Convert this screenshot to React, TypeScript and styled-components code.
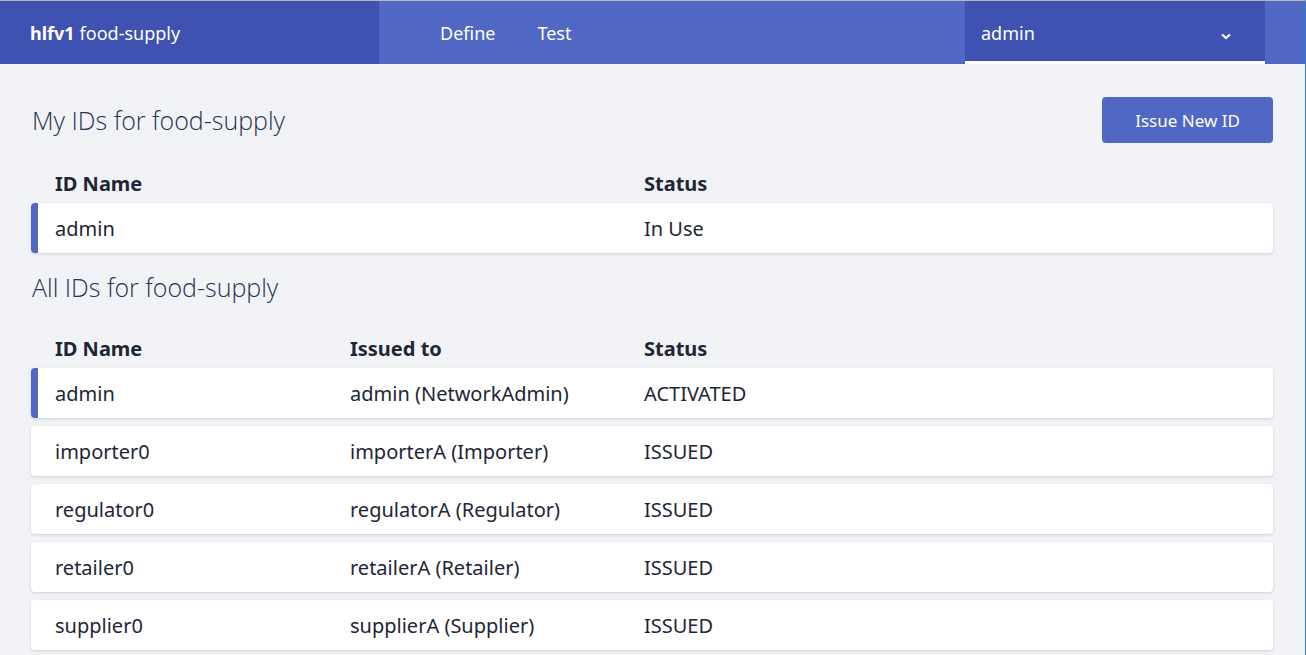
import React from "react";
import styled, { createGlobalStyle } from "styled-components";

const Global = createGlobalStyle`
  html, body { margin: 0; padding: 0; }
  body {
    background: #f2f3f7;
    font-family: "Noto Sans", "Open Sans", sans-serif;
    color: #1e2635;
  }
`;

const Page = styled.div`
  min-height: 655px;
  border-top: 1px solid #b8b8b8;
  border-right: 1px solid #2f7fd0;
  box-sizing: border-box;
  background: #f2f3f7;
`;

const Header = styled.header`
  display: flex;
  height: 63px;
  background: #5068c4;
  color: #fff;
`;

const Brand = styled.div`
  width: 379px;
  background: #3f52b1;
  display: flex;
  align-items: center;
  padding-left: 30px;
  box-sizing: border-box;
  font-size: 18px;
  b { font-weight: 700; margin-right: 5px; }
`;

const Nav = styled.nav`
  flex: 1;
  display: flex;
  align-items: center;
  padding-left: 61px;
  gap: 42px;
  font-size: 18px;
`;

const NavItem = styled.span`
  cursor: pointer;
`;

const UserMenu = styled.div`
  width: 300px;
  margin-right: 40px;
  background: #3f52b1;
  border-bottom: 3px solid #ffffff;
  display: flex;
  align-items: center;
  justify-content: space-between;
  padding: 3px 34px 0 16px;
  box-sizing: border-box;
  font-size: 18px;
  svg { margin-top: 8px; }
`;

const Main = styled.main`
  padding: 33px 32px 0 31px;
`;

const SectionHead = styled.div`
  display: flex;
  align-items: center;
  justify-content: space-between;
`;

const Title = styled.h2`
  margin: 0;
  padding-left: 1px;
  font-family: "Open Sans", "Noto Sans", sans-serif;
  font-weight: 300;
  font-size: 25px;
  color: #263551;
`;

const Button = styled.button`
  width: 171px;
  height: 46px;
  background: #5068c4;
  color: #fff;
  border: none;
  border-radius: 4px;
  font-family: "Noto Sans", sans-serif;
  font-size: 17px;
  cursor: pointer;
`;

const Columns = styled.div`
  display: grid;
  grid-template-columns: 295px 294px 1fr;
  padding-left: 24px;
  align-items: center;
  font-size: 20px;
`;

const HeadRow = styled(Columns)<{ $top: number }>`
  height: 40px;
  font-weight: 700;
  color: #1e2635;
  margin-top: ${(p) => p.$top}px;
`;

const Row = styled(Columns)<{ $active?: boolean }>`
  position: relative;
  height: 50px;
  background: #fff;
  border-radius: 4px;
  box-shadow: 0 1px 3px rgba(40, 50, 80, 0.18);
  margin-bottom: 8px;
  overflow: hidden;
  &::before {
    content: "";
    display: ${(p) => (p.$active ? "block" : "none")};
    position: absolute;
    left: 0;
    top: 0;
    bottom: 0;
    width: 7px;
    background: #5068c4;
  }
`;

const SecondHead = styled(SectionHead)`
  height: 52px;
`;

const Chevron = () => (
  <svg width="10" height="7" viewBox="0 0 10 7">
    <path d="M1 1.5 L5 5 L9 1.5" stroke="#fff" strokeWidth="2.2" fill="none" />
  </svg>
);

const all = [
  ["admin", "admin (NetworkAdmin)", "ACTIVATED", true],
  ["importer0", "importerA (Importer)", "ISSUED", false],
  ["regulator0", "regulatorA (Regulator)", "ISSUED", false],
  ["retailer0", "retailerA (Retailer)", "ISSUED", false],
  ["supplier0", "supplierA (Supplier)", "ISSUED", false],
] as const;

export default function App() {
  return (
    <Page>
      <Global />
      <Header>
        <Brand>
          <b>hlfv1</b> food-supply
        </Brand>
        <Nav>
          <NavItem>Define</NavItem>
          <NavItem>Test</NavItem>
        </Nav>
        <UserMenu>
          <span>admin</span>
          <Chevron />
        </UserMenu>
      </Header>
      <Main>
        <SectionHead>
          <Title>My IDs for food-supply</Title>
          <Button>Issue New ID</Button>
        </SectionHead>
        <HeadRow $top={20}>
          <span>ID Name</span>
          <span />
          <span>Status</span>
        </HeadRow>
        <Row $active>
          <span>admin</span>
          <span />
          <span>In Use</span>
        </Row>
        <SecondHead>
          <Title>All IDs for food-supply</Title>
        </SecondHead>
        <HeadRow $top={15}>
          <span>ID Name</span>
          <span>Issued to</span>
          <span>Status</span>
        </HeadRow>
        {all.map(([n, i, s, a]) => (
          <Row key={n} $active={a}>
            <span>{n}</span>
            <span>{i}</span>
            <span>{s}</span>
          </Row>
        ))}
      </Main>
    </Page>
  );
}
